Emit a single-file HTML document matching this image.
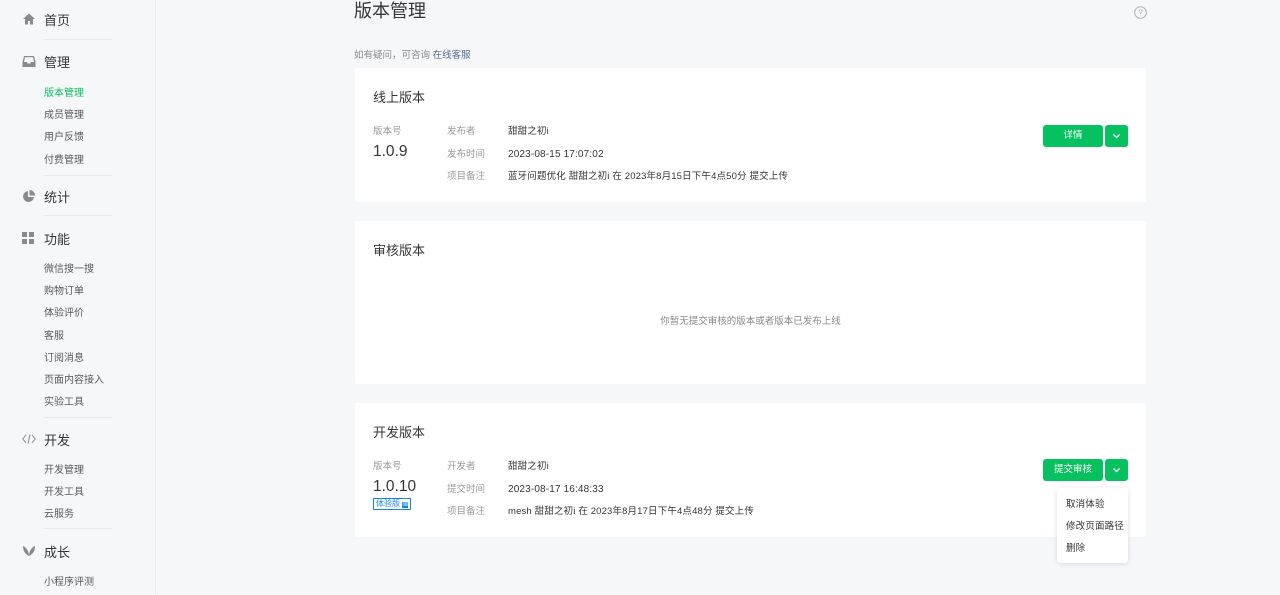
<!DOCTYPE html>
<html><head><meta charset="utf-8"><style>
*{margin:0;padding:0;box-sizing:border-box}
body{width:1280px;height:595px;overflow:hidden;background:#f6f7f9;font-family:"Liberation Sans","Noto Sans CJK SC",sans-serif;position:relative;color:#353535}
.t{position:absolute;white-space:nowrap;line-height:1}
.side{position:absolute;left:0;top:0;width:156px;height:595px;border-right:1px solid #ebedf0;background:#f6f7f9}
.h{font-size:13px;color:#353535;left:44px}
.s{font-size:10px;color:#5a5a5a;left:44px}
.d{position:absolute;left:44px;width:68px;height:1px;background:#e7e8ea}
.ic{position:absolute;left:22px}
.card{position:absolute;left:355px;width:791px;background:#fff;border-radius:2px}
.ct{font-size:13px;color:#353535}
.lb{font-size:9.5px;color:#9a9a9a}
.vl{font-size:9.5px;color:#353535;letter-spacing:.15px}
.ver{font-size:15px;color:#353535}
.btn{position:absolute;background:#07c160;border-radius:3px;color:#fff;font-size:9.5px;text-align:center}
.arr{position:absolute;background:#07c160;border-radius:3px}
</style></head><body>
<div class="side">
<svg class="ic" style="top:12px" width="14" height="14" viewBox="0 0 14 14"><path d="M7 1.5L1 7h2v5.5h3V9h2v3.5h3V7h2z" fill="#8a8a8a"/></svg>
<div class="t h" style="top:14px">首页</div>
<div class="d" style="top:39px"></div>
<svg class="ic" style="top:55px" width="14" height="13" viewBox="0 0 14 13"><path d="M2 1h10l1.5 6v5H.5V7z" fill="#8a8a8a"/><path d="M2 7h3l.5 1.5h3L9 7h3L11 2.3H3z" fill="#f6f7f9"/></svg>
<div class="t h" style="top:56px">管理</div>
<div class="t s" style="top:89px;color:#07c160">版本管理</div>
<div class="t s" style="top:111px">成员管理</div>
<div class="t s" style="top:133px">用户反馈</div>
<div class="t s" style="top:156px">付费管理</div>
<div class="d" style="top:175px"></div>
<svg class="ic" style="top:189px" width="14" height="14" viewBox="0 0 14 14"><path d="M6 2A5.5 5.5 0 1 0 12 8H6z" fill="#8a8a8a"/><path d="M7.5 1v5.5H13A5.5 5.5 0 0 0 7.5 1z" fill="#8a8a8a"/></svg>
<div class="t h" style="top:191px">统计</div>
<div class="d" style="top:215px"></div>
<svg class="ic" style="top:232px" width="12" height="12" viewBox="0 0 12 12" fill="#8a8a8a"><rect x="0" y="0" width="5" height="5"/><rect x="7" y="0" width="5" height="5"/><rect x="0" y="7" width="5" height="5"/><rect x="7" y="7" width="5" height="5"/></svg>
<div class="t h" style="top:233px">功能</div>
<div class="t s" style="top:265px">微信搜一搜</div>
<div class="t s" style="top:287px">购物订单</div>
<div class="t s" style="top:309px">体验评价</div>
<div class="t s" style="top:332px">客服</div>
<div class="t s" style="top:354px">订阅消息</div>
<div class="t s" style="top:376px">页面内容接入</div>
<div class="t s" style="top:398px">实验工具</div>
<div class="d" style="top:417px"></div>
<svg class="ic" style="top:433px" width="14" height="12" viewBox="0 0 14 12" fill="none" stroke="#8a8a8a" stroke-width="1"><path d="M4 2L.8 6 4 10M10 2l3.2 4L10 10M8 1.5L6 10.5"/></svg>
<div class="t h" style="top:434px">开发</div>
<div class="t s" style="top:466px">开发管理</div>
<div class="t s" style="top:488px">开发工具</div>
<div class="t s" style="top:510px">云服务</div>
<div class="d" style="top:528px"></div>
<svg class="ic" style="top:545px" width="14" height="12" viewBox="0 0 14 12" fill="#8a8a8a"><path d="M7 11C7 6 4 2 1 1c0 5 2 8 6 10zM7 11c0-5 3-9 6-10 0 5-2 8-6 10z"/></svg>
<div class="t h" style="top:546px">成长</div>
<div class="t s" style="top:578px">小程序评测</div>
</div>

<div class="t" style="left:354px;top:2px;font-size:18px;color:#353535">版本管理</div>
<svg style="position:absolute;left:1134px;top:6px" width="13" height="13" viewBox="0 0 13 13"><circle cx="6.5" cy="6.5" r="5.8" fill="none" stroke="#b2b2b2"/><text x="6.5" y="9.5" font-size="8.5" text-anchor="middle" fill="#b2b2b2" font-family="Liberation Sans">?</text></svg>
<div class="t" style="left:354px;top:51px;font-size:9.5px;color:#8a8a8a">如有疑问，可咨询 <span style="color:#576b95">在线客服</span></div>

<div class="card" style="top:68px;height:134px">
<div class="t ct" style="left:18px;top:23px">线上版本</div>
<div class="t lb" style="left:18px;top:59px">版本号</div>
<div class="t ver" style="left:18px;top:76px;font-size:15.5px">1.0.9</div>
<div class="t lb" style="left:92px;top:59px">发布者</div>
<div class="t vl" style="left:153px;top:59px">甜甜之初i</div>
<div class="t lb" style="left:92px;top:82px">发布时间</div>
<div class="t vl" style="left:153px;top:82px;font-size:10px">2023-08-15 17:07:02</div>
<div class="t lb" style="left:92px;top:104px">项目备注</div>
<div class="t vl" style="left:153px;top:104px">蓝牙问题优化 甜甜之初i 在 2023年8月15日下午4点50分 提交上传</div>
</div>
<div class="btn" style="left:1043px;top:125px;width:60px;height:22px;line-height:22px">详情</div>
<div class="arr" style="left:1105px;top:125px;width:23px;height:22px"><svg width="23" height="22"><path d="M8.5 9.5l3 3 3-3" fill="none" stroke="#fff" stroke-width="1.3"/></svg></div>

<div class="card" style="top:221px;height:163px">
<div class="t ct" style="left:18px;top:23px">审核版本</div>
<div class="t lb" style="left:0;width:791px;text-align:center;top:96px;color:#8a8a8a">你暂无提交审核的版本或者版本已发布上线</div>
</div>

<div class="card" style="top:403px;height:134px">
<div class="t ct" style="left:18px;top:23px">开发版本</div>
<div class="t lb" style="left:18px;top:59px">版本号</div>
<div class="t ver" style="left:18px;top:76px;font-size:15.5px">1.0.10</div>
<div class="t" style="left:18px;top:95px;font-size:8px;color:#1485ee;border:1px solid #1485ee;padding:1px 2px;background:#fff">体验版 <span style="background:#1485ee;color:#fff;font-size:6px">▦</span></div>
<div class="t lb" style="left:92px;top:59px">开发者</div>
<div class="t vl" style="left:153px;top:59px">甜甜之初i</div>
<div class="t lb" style="left:92px;top:82px">提交时间</div>
<div class="t vl" style="left:153px;top:82px;font-size:10px">2023-08-17 16:48:33</div>
<div class="t lb" style="left:92px;top:104px">项目备注</div>
<div class="t vl" style="left:153px;top:104px">mesh 甜甜之初i 在 2023年8月17日下午4点48分 提交上传</div>
</div>
<div class="btn" style="left:1043px;top:459px;width:60px;height:22px;line-height:22px">提交审核</div>
<div class="arr" style="left:1105px;top:459px;width:23px;height:22px"><svg width="23" height="22"><path d="M8.5 9.5l3 3 3-3" fill="none" stroke="#fff" stroke-width="1.3"/></svg></div>

<div style="position:absolute;left:1057px;top:488px;width:71px;height:75px;background:#fff;border-radius:3px;box-shadow:0 1px 6px rgba(0,0,0,.12)">
<div class="t vl" style="left:9px;top:12px">取消体验</div>
<div class="t vl" style="left:9px;top:34px">修改页面路径</div>
<div class="t vl" style="left:9px;top:56px">删除</div>
</div>
</body></html>
